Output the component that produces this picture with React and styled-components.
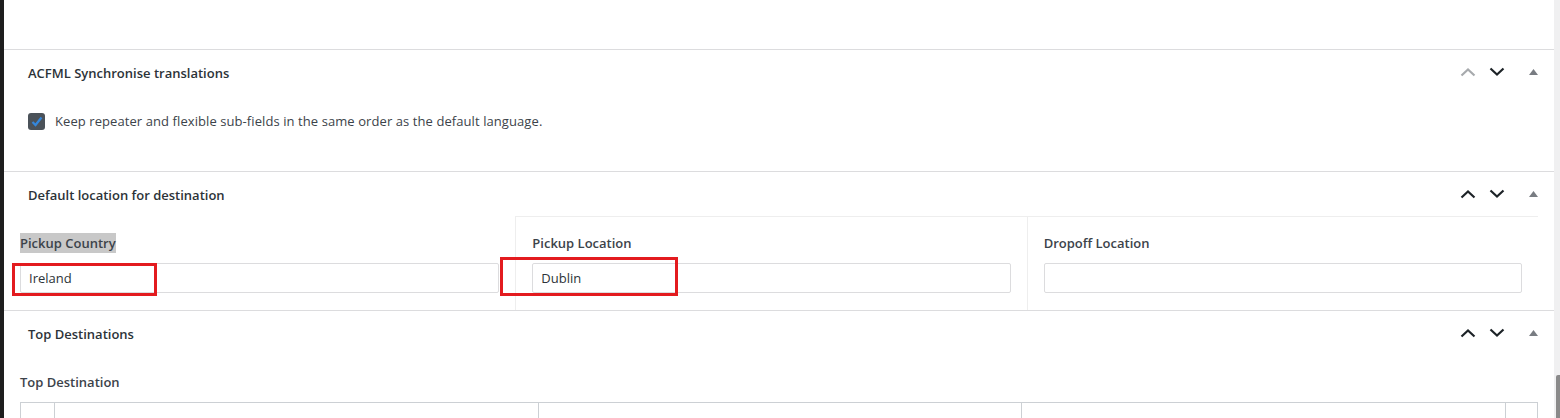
import React from "react";
import styled, { createGlobalStyle } from "styled-components";

const Global = createGlobalStyle`
  html, body { margin: 0; padding: 0; background: #ffffff; }
  body { font-family: "Open Sans", "Noto Sans", sans-serif; color: #1d2327; }
  * { box-sizing: border-box; }
`;

const Page = styled.div`
  display: flex;
  width: 1560px;
  height: 418px;
  overflow: hidden;
  background: #fff;
`;

const AdminEdge = styled.div`
  width: 4px;
  flex: none;
  background: #1e1e1e;
`;

const Main = styled.div`
  flex: 1;
  display: flex;
  flex-direction: column;
  min-width: 0;
`;

const Gutter = styled.div`
  width: 6px;
  flex: none;
  background: #f0f0f1;
  position: relative;
`;

const ScrollThumb = styled.div`
  position: absolute;
  left: 2px;
  right: 0;
  top: 375px;
  bottom: 0;
  background: #8a8a8a;
  border-radius: 2px 0 0 0;
`;

const TopSpace = styled.div`
  height: 50px;
  flex: none;
  border-bottom: 1px solid #dcdcde;
`;

const Postbox = styled.section`
  flex: none;
  border-bottom: 1px solid #dcdcde;
`;

const Header = styled.div`
  height: 44px;
  display: flex;
  align-items: center;
  padding: 0 0 0 24px;
`;

const Title = styled.h2`
  flex: 1;
  margin: 0;
  padding-top: 2px;
  font-size: 13px;
  font-weight: 600;
  color: #2c3338;
`;

const Actions = styled.div`
  display: flex;
  align-items: center;
  height: 100%;
  padding-right: 3px;
`;

const ActionBtn = styled.span`
  width: 29px;
  height: 36px;
  display: flex;
  align-items: center;
  justify-content: center;
  color: ${(p) => (p.$disabled ? "#a7aaad" : "#1d2327")};
`;

const ToggleBtn = styled(ActionBtn)`
  width: 36px;
  margin-left: 4px;
  color: #787c82;
`;

const SyncBody = styled.div`
  padding: 17px 24px 40px 24px;
`;

const CheckRow = styled.label`
  display: flex;
  align-items: center;
  gap: 10px;
  height: 20px;
  font-size: 13px;
  color: #3c434a;
  letter-spacing: 0.08px;
`;

const CheckBox = styled.span`
  width: 17px;
  height: 17px;
  border-radius: 3px;
  background: #4b5259;
  display: flex;
  align-items: center;
  justify-content: center;
  flex: none;
`;

const Fields = styled.div`
  display: flex;
  width: 1534px;
`;

const Field = styled.div`
  position: relative;
  width: ${(p) => p.$width || "100%"};
  padding: 16px 16px 17px 16px;
  border-top: 1px solid ${(p) => (p.$first ? "transparent" : "#eeeeee")};
  border-left: ${(p) => (p.$first ? "none" : "1px solid #eeeeee")};
`;

const Label = styled.label`
  display: block;
  width: fit-content;
  height: 20px;
  line-height: 20px;
  margin-bottom: 10px;
  font-size: 13px;
  font-weight: 600;
  color: #3c434a;
  background: ${(p) => (p.$selected ? "#c8c8c8" : "transparent")};
`;

const Input = styled.div`
  height: 30px;
  border: 1px solid #dcdcde;
  border-radius: 2px;
  padding: 0 8px;
  display: flex;
  align-items: center;
  font-size: 13px;
  color: #2c3338;
`;

const Annotation = styled.div`
  position: absolute;
  border: 3px solid #e31b1f;
  pointer-events: none;
`;

const TableField = styled.div`
  padding: 17px 16px 0 16px;
`;

const Table = styled.div`
  display: grid;
  grid-template-columns: 33px 1fr 1fr 1fr 32px;
  width: 1518px;
  height: 40px;
  border: 1px solid #ccd0d4;
  border-bottom: none;
`;

const Cell = styled.div`
  border-left: ${(p) => (p.$first ? "none" : "1px solid #ccd0d4")};
`;

const Chevron = ({ up }) => (
  <svg width="16" height="10" viewBox="0 0 16 10" fill="none">
    <path
      d={up ? "M1.5 8.5 L8 2.5 L14.5 8.5" : "M1.5 1.5 L8 7.5 L14.5 1.5"}
      stroke="currentColor"
      strokeWidth="2.2"
      strokeLinecap="butt"
      strokeLinejoin="miter"
    />
  </svg>
);

const Triangle = () => (
  <svg width="9" height="6" viewBox="0 0 9 6">
    <path d="M4.5 0 L9 6 L0 6 Z" fill="currentColor" />
  </svg>
);

const BoxActions = ({ upDisabled }) => (
  <Actions>
    <ActionBtn $disabled={upDisabled}>
      <Chevron up />
    </ActionBtn>
    <ActionBtn>
      <Chevron />
    </ActionBtn>
    <ToggleBtn>
      <Triangle />
    </ToggleBtn>
  </Actions>
);

export default function App() {
  return (
    <>
      <Global />
      <Page>
        <AdminEdge />
        <Main>
          <TopSpace />

          <Postbox>
            <Header>
              <Title>ACFML Synchronise translations</Title>
              <BoxActions upDisabled />
            </Header>
            <SyncBody>
              <CheckRow>
                <CheckBox>
                  <svg width="12" height="11" viewBox="0 0 12 11">
                    <path
                      d="M1.5 6 L4.5 9 L10.5 1.5"
                      fill="none"
                      stroke="#3487dc"
                      strokeWidth="2.2"
                    />
                  </svg>
                </CheckBox>
                Keep repeater and flexible sub-fields in the same order as the default language.
              </CheckRow>
            </SyncBody>
          </Postbox>

          <Postbox>
            <Header>
              <Title>Default location for destination</Title>
              <BoxActions />
            </Header>
            <Fields>
              <Field $first $width="33.3333%">
                <Label $selected>Pickup Country</Label>
                <Input>Ireland</Input>
                <Annotation style={{ left: 8, top: 46, width: 145, height: 33 }} />
              </Field>
              <Field $width="33.3333%">
                <Label>Pickup Location</Label>
                <Input>Dublin</Input>
                <Annotation style={{ left: -16, top: 40, width: 178, height: 39 }} />
              </Field>
              <Field $width="33.3333%">
                <Label>Dropoff Location</Label>
                <Input />
              </Field>
            </Fields>
          </Postbox>

          <Postbox>
            <Header>
              <Title>Top Destinations</Title>
              <BoxActions />
            </Header>
            <TableField>
              <Label>Top Destination</Label>
              <Table>
                <Cell $first />
                <Cell />
                <Cell />
                <Cell />
                <Cell />
              </Table>
            </TableField>
          </Postbox>
        </Main>
        <Gutter>
          <ScrollThumb />
        </Gutter>
      </Page>
    </>
  );
}
